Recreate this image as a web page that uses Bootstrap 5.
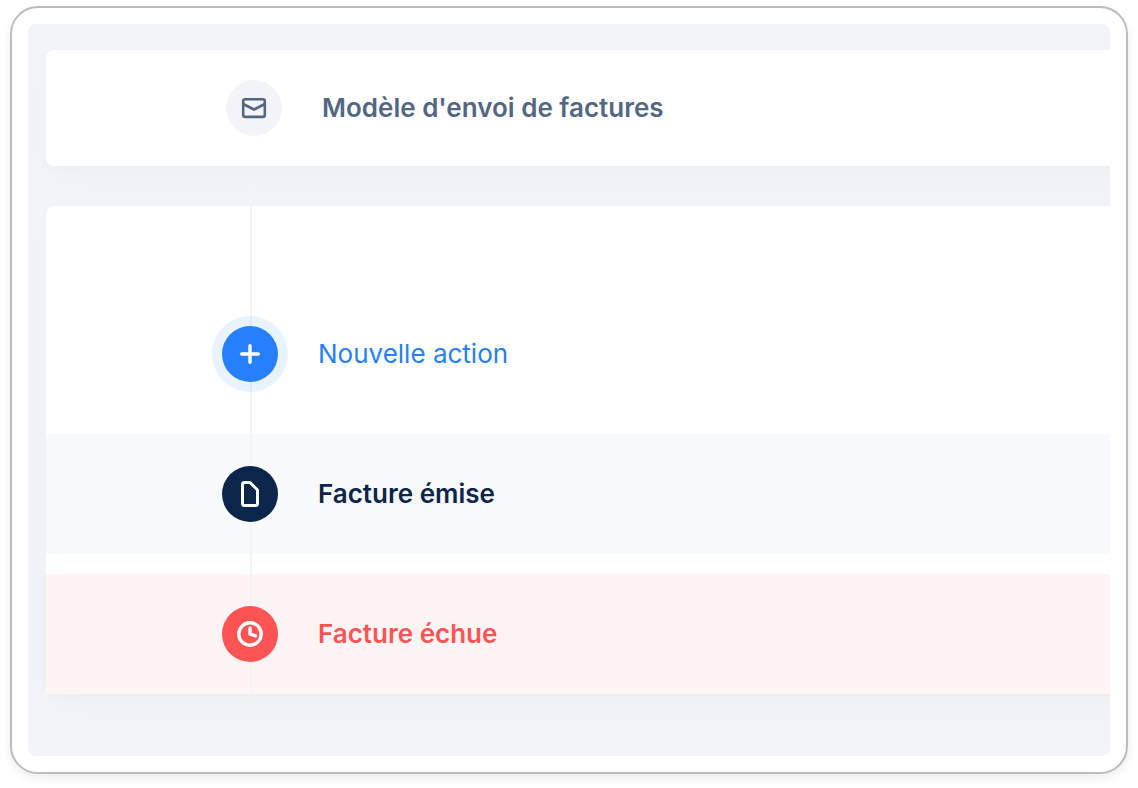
<!DOCTYPE html>
<html lang="fr">
<head>
<meta charset="utf-8">
<meta name="viewport" content="width=device-width, initial-scale=1">
<title>Modèle d'envoi de factures</title>
<link href="https://cdn.jsdelivr.net/npm/bootstrap@5.3.0/dist/css/bootstrap.min.css" rel="stylesheet">
<style>
  body { font-family: Inter, "Liberation Sans", sans-serif; font-size: 26px; line-height: 32px; background: #fff; }
  .page { padding: 6px 10px 14px; }
  .window { padding: 16px; border: 2px solid #bcbcbc; border-radius: 28px; box-shadow: 0 4px 10px rgba(0,0,0,.08); min-height: calc(100vh - 20px); }
  .workspace { padding: 26px 0 62px 18px; border-radius: 8px; background: #f3f4f9; }
  /* panels run past the right edge of the workspace */
  .panel { margin-right: -80px; background: #fff; border-radius: 8px 0 0 8px; box-shadow: 0 10px 40px rgba(0,50,40,.025), 0 2px 8px rgba(0,90,60,.015); }
  .model { padding: 30px 0 30px 180px; margin-bottom: 40px; color: #536783; }
  .model-title { font-size: 26px; line-height: 32px; }
  .timeline { padding-top: 88px; border-bottom-left-radius: 0; }
  .timeline::before { content: ""; position: absolute; z-index: 1; top: -20px; bottom: 0; left: 204px; width: 2px; background: #f2f4f8; }
  .step { padding: 32px 0 32px 176px; }
  .step + .step { margin-top: 20px; }
  .disc { width: 56px; height: 56px; z-index: 2; }
  .label-gap { gap: 40px; }
  .mail { background: #f3f4f9; }
  .create { color: #267fff; font-size: 26px; line-height: 32px; }
  .create .disc { background: #267fff; box-shadow: 0 0 0 10px rgba(38,127,255,.1); }
  .issued { background: #f8f9fb; color: #0c254a; }
  .issued .disc { background: #0c254a; }
  .overdue { background: #fff4f4; color: #ff5454; }
  .overdue .disc { background: #ff5454; }
</style>
</head>
<body>
<div class="page">
  <main class="window d-flex flex-column">
    <div class="workspace flex-grow-1 overflow-hidden">
      <header class="panel model d-flex align-items-center label-gap">
        <span class="disc mail rounded-circle d-flex align-items-center justify-content-center">
          <svg width="32" height="32" viewBox="0 0 32 32" fill="none" stroke="#536783" stroke-width="2.600" stroke-linejoin="round" aria-hidden="true"><rect x="5.200" y="7.300" width="21.600" height="17.600" rx="2"/><path d="M5.200 12 16 17.500 26.800 12"/></svg>
        </span>
        <h1 class="m-0 fw-semibold model-title">Modèle d'envoi de factures</h1>
      </header>
      <section class="panel timeline position-relative">
        <div class="step d-flex">
          <button type="button" class="create btn p-0 border-0 d-flex align-items-center label-gap">
            <span class="disc position-relative rounded-circle d-flex align-items-center justify-content-center">
              <svg width="32" height="32" viewBox="0 0 32 32" fill="none" stroke="#fff" stroke-width="3.400" stroke-linecap="round" aria-hidden="true"><path d="M16 7.700v16.600M7.700 16h16.600"/></svg>
            </span>
            Nouvelle action
          </button>
        </div>
        <div class="step issued d-flex align-items-center label-gap fw-semibold">
          <span class="disc position-relative rounded-circle d-flex align-items-center justify-content-center">
            <svg width="32" height="32" viewBox="0 0 32 32" fill="none" stroke="#fff" stroke-width="3" stroke-linejoin="round" aria-hidden="true"><path d="M10.500 4.500h5.500L23.500 12v13.500a2 2 0 0 1-2 2h-11a2 2 0 0 1-2-2v-19a2 2 0 0 1 2-2z"/></svg>
          </span>
          <span>Facture émise</span>
        </div>
        <div class="step overdue d-flex align-items-center label-gap fw-semibold">
          <span class="disc position-relative rounded-circle d-flex align-items-center justify-content-center">
            <svg width="32" height="32" viewBox="0 0 32 32" fill="none" stroke="#fff" stroke-width="3.400" stroke-linecap="round" stroke-linejoin="round" aria-hidden="true"><circle cx="16" cy="16" r="11.200"/><path d="M16 10v6l5.500 1.800"/></svg>
          </span>
          <span>Facture échue</span>
        </div>
      </section>
    </div>
  </main>
</div>
<script src="https://cdn.jsdelivr.net/npm/bootstrap@5.3.0/dist/js/bootstrap.bundle.min.js"></script>
</body>
</html>
